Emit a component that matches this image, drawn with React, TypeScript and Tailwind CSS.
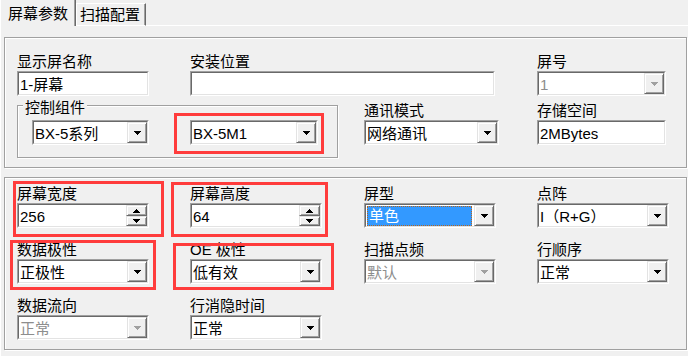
import React from "react";

type Ch = { children?: React.ReactNode };

function Tri({ up = false, color = "#000" }: { up?: boolean; color?: string }) {
  return (
    <svg width="7" height="4" viewBox="0 0 7 4" shapeRendering="crispEdges" className="block">
      {up ? (
        <path d="M3 0h1v1H3z M2 1h3v1H2z M1 2h5v1H1z M0 3h7v1H0z" fill={color} />
      ) : (
        <path d="M0 0h7v1H0z M1 1h5v1H1z M2 2h3v1H2z M3 3h1v1H3z" fill={color} />
      )}
    </svg>
  );
}

function Sunken({ className = "", children }: Ch & { className?: string }) {
  return (
    <div
      className={`h-[25px] border border-t-[#a0a0a0] border-l-[#a0a0a0] border-r-white border-b-white ${className}`}
    >
      <div className="h-full flex border border-t-[#696969] border-l-[#696969] border-r-[#e3e3e3] border-b-[#e3e3e3] bg-white">
        {children}
      </div>
    </div>
  );
}

function RaisedBtn({ className = "", children }: Ch & { className?: string }) {
  return (
    <div
      className={`flex items-center justify-center bg-[#f0f0f0] border border-t-[#e3e3e3] border-l-[#e3e3e3] border-r-[#696969] border-b-[#696969] shadow-[inset_1px_1px_0_#ffffff,inset_-1px_-1px_0_#a0a0a0] ${className}`}
    >
      {children}
    </div>
  );
}

function Edit({ text, className = "" }: { text: string; className?: string }) {
  return (
    <Sunken className={className}>
      <div className="flex-1 pl-[1px] pt-[2px] leading-[19px] text-[15px] whitespace-nowrap overflow-hidden">
        {text}
      </div>
    </Sunken>
  );
}

function Spin({ text }: { text: string }) {
  return (
    <Sunken>
      <div className="flex-1 pl-[1px] pt-[2px] leading-[19px] text-[15px] whitespace-nowrap overflow-hidden">
        {text}
      </div>
      <div className="w-[21px] h-full flex flex-col">
        <RaisedBtn className="h-[11px]">
          <Tri up />
        </RaisedBtn>
        <RaisedBtn className="h-[10px]">
          <Tri />
        </RaisedBtn>
      </div>
    </Sunken>
  );
}

function Combo({
  text,
  className = "",
  disabled = false,
  selected = false,
}: {
  text: string;
  className?: string;
  disabled?: boolean;
  selected?: boolean;
}) {
  return (
    <Sunken className={className}>
      {selected ? (
        <div className="flex-1 pl-[1px] pt-[1px] pr-[2px] overflow-hidden">
          <div className="h-[20px] bg-[#3399ff] border border-dotted border-[#b5651d] pl-[1px] leading-[17px] text-[15px] text-white whitespace-nowrap overflow-hidden">
            {text}
          </div>
        </div>
      ) : (
        <div
          className={`flex-1 pl-[1px] pt-[2px] leading-[19px] text-[15px] whitespace-nowrap overflow-hidden ${
            disabled ? "text-[#8d8d8d]" : "text-black"
          }`}
        >
          {text}
        </div>
      )}
      <RaisedBtn className="w-[20px] h-full">
        <Tri color={disabled ? "#a0a0a0" : "#000"} />
      </RaisedBtn>
    </Sunken>
  );
}

function Field({
  label,
  className = "",
  children,
}: Ch & { label: string; className?: string }) {
  return (
    <div className={`flex flex-col ${className}`}>
      <div className="h-[15px] leading-[15px] text-[15px] whitespace-nowrap">{label}</div>
      <div className="mt-[2px]">{children}</div>
    </div>
  );
}

function RedBox({ className = "" }: { className?: string }) {
  return <div className={`absolute border-[3px] border-[#ff3c3c] pointer-events-none ${className}`} />;
}

export default function App() {
  return (
    <div className="w-[688px] h-[356px] bg-[#f0f0f0] overflow-hidden text-black text-[15px] font-['Liberation_Sans','Noto_Sans_CJK_SC',sans-serif] flex flex-col">
      {/* Tabs */}
      <div className="flex h-[26px] shrink-0">
        <div className="w-[76px] h-[26px] border-l border-white border-r border-r-[#696969] shadow-[inset_-1px_0_0_#a0a0a0] pl-[7px] pt-[6px] leading-[15px] whitespace-nowrap">
          屏幕参数
        </div>
        <div className="w-[70px] h-[23px] mt-[3px] border-t border-l border-b border-white border-r border-r-[#696969] shadow-[inset_-1px_0_0_#a0a0a0] pl-[3px] pt-[3px] leading-[15px] whitespace-nowrap">
          扫描配置
        </div>
        <div className="flex-1 h-[26px] border-b border-white" />
      </div>

      {/* Tab page */}
      <div className="flex-1 border-l border-white pl-[3px] pt-[11px]">
        {/* Panel 1 */}
        <div className="relative w-[683px] border border-[#a0a0a0] shadow-[inset_1px_1px_0_#ffffff,1px_1px_0_#ffffff] pt-[16px] pb-[9px] pl-[12px]">
          <div className="flex items-start">
            <Field label="显示屏名称" className="w-[132px]">
              <Edit text="1-屏幕" />
            </Field>
            <Field label="安装位置" className="ml-[41px] w-[305px]">
              <Edit text="" />
            </Field>
            <Field label="屏号" className="ml-[42px] w-[129px]">
              <Combo text="1" disabled />
            </Field>
          </div>
          <div className="flex items-start mt-[7px]">
            <div className="relative mt-[2px] w-[321px] h-[53px] border border-[#a0a0a0] shadow-[inset_1px_1px_0_#ffffff,1px_1px_0_#ffffff] flex items-start">
              <div className="absolute left-[5px] top-[-6px] px-[2px] bg-[#f0f0f0] leading-[15px] whitespace-nowrap">
                控制组件
              </div>
              <Combo text="BX-5系列" className="ml-[14px] mt-[14px] w-[117px]" />
              <Combo text="BX-5M1" className="ml-[41px] mt-[14px] w-[128px]" />
            </div>
            <Field label="通讯模式" className="ml-[26px] w-[135px]">
              <Combo text="网络通讯" />
            </Field>
            <Field label="存储空间" className="ml-[38px] w-[129px]">
              <Edit text="2MBytes" />
            </Field>
          </div>
          <RedBox className="left-[169px] top-[75px] w-[150px] h-[41px]" />
        </div>

        {/* Panel 2 */}
        <div className="relative mt-[9px] w-[683px] border border-[#a0a0a0] shadow-[inset_1px_1px_0_#ffffff,1px_1px_0_#ffffff] pt-[8px] pb-[9px] pl-[12px]">
          <div className="flex items-start">
            <Field label="屏幕宽度" className="w-[132px]">
              <Spin text="256" />
            </Field>
            <Field label="屏幕高度" className="ml-[41px] w-[132px]">
              <Spin text="64" />
            </Field>
            <Field label="屏型" className="ml-[42px] w-[132px]">
              <Combo text="单色" selected />
            </Field>
            <Field label="点阵" className="ml-[41px] w-[132px]">
              <Combo text="I（R+G）" />
            </Field>
          </div>
          <div className="flex items-start mt-[14px]">
            <Field label="数据极性" className="w-[132px]">
              <Combo text="正极性" />
            </Field>
            <Field label="OE 极性" className="ml-[41px] w-[132px]">
              <Combo text="低有效" />
            </Field>
            <Field label="扫描点频" className="ml-[42px] w-[132px]">
              <Combo text="默认" disabled />
            </Field>
            <Field label="行顺序" className="ml-[41px] w-[132px]">
              <Combo text="正常" />
            </Field>
          </div>
          <div className="flex items-start mt-[14px]">
            <Field label="数据流向" className="w-[132px]">
              <Combo text="正常" disabled />
            </Field>
            <Field label="行消隐时间" className="ml-[41px] w-[132px]">
              <Combo text="正常" />
            </Field>
          </div>
          <RedBox className="left-[8px] top-[3px] w-[151px] h-[56px]" />
          <RedBox className="left-[166px] top-[4px] w-[157px] h-[55px]" />
          <RedBox className="left-[5px] top-[62px] w-[146px] h-[50px]" />
          <RedBox className="left-[168px] top-[65px] w-[161px] h-[47px]" />
        </div>
      </div>
    </div>
  );
}
